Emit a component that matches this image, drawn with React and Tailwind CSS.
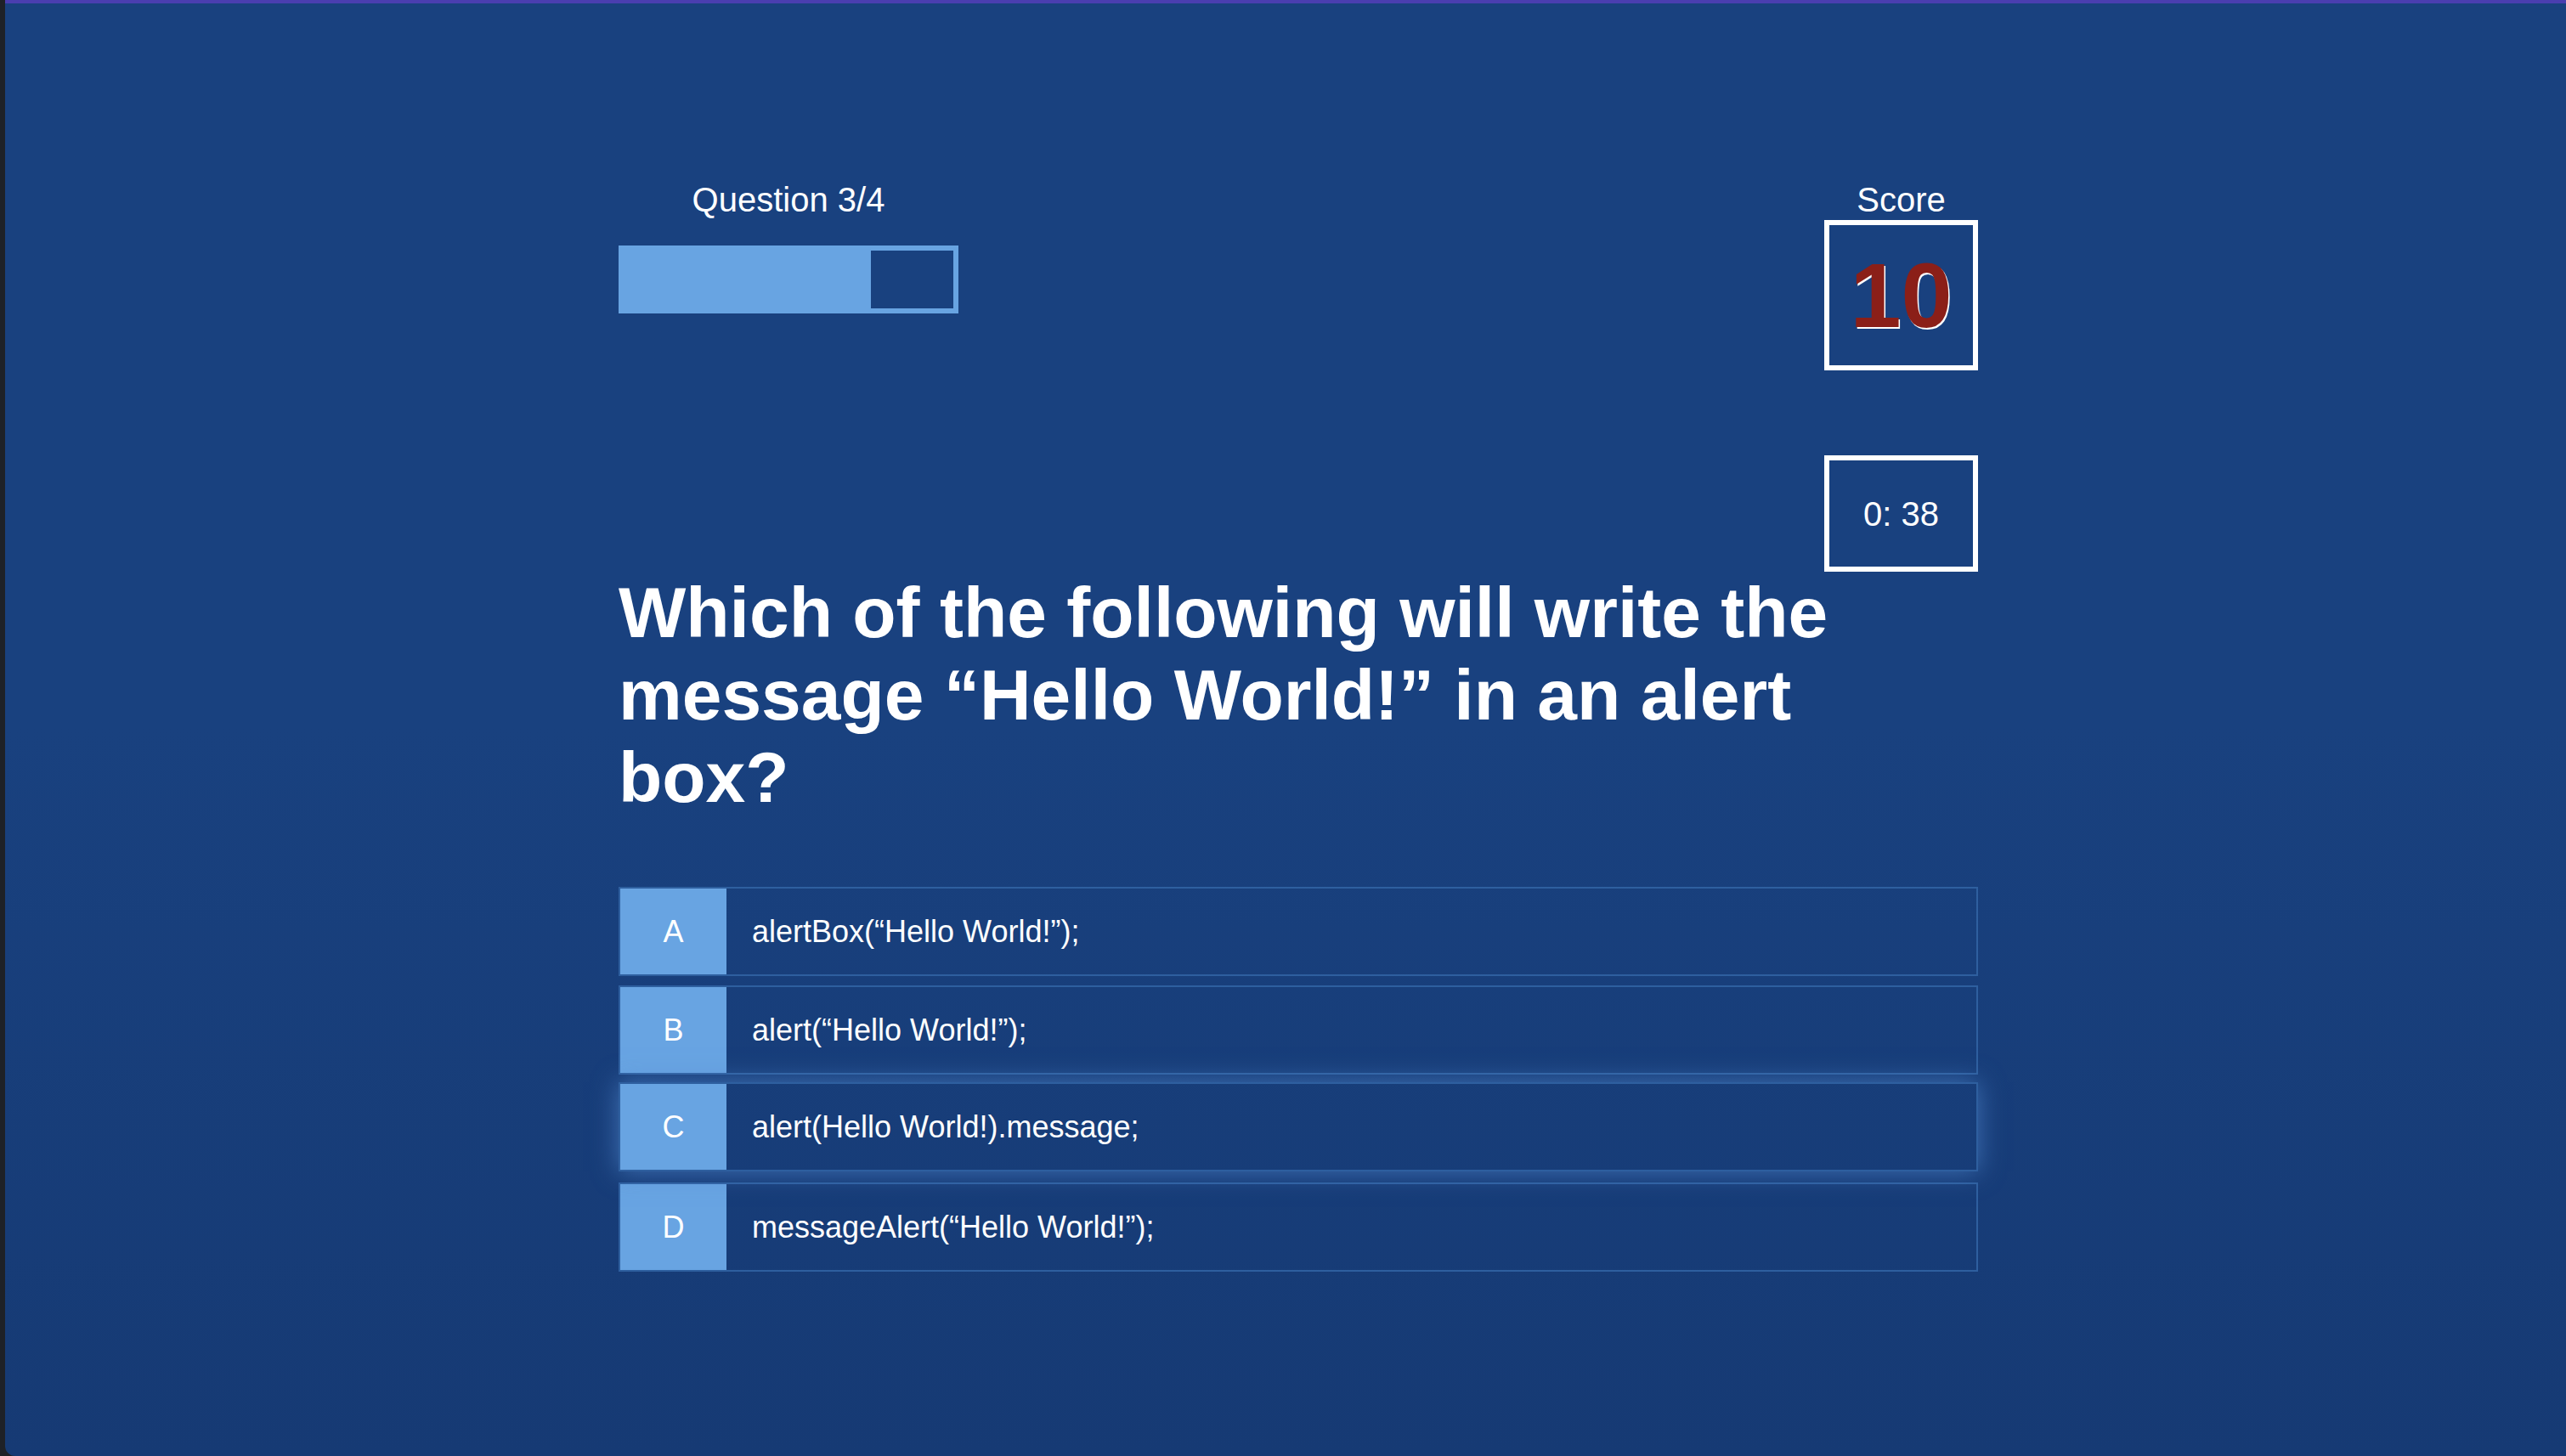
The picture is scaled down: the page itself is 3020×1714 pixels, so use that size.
import React from 'react';

const answers = [
  { letter: 'A', text: 'alertBox(“Hello World!”);' },
  { letter: 'B', text: 'alert(“Hello World!”);' },
  { letter: 'C', text: 'alert(Hello World!).message;', hover: true },
  { letter: 'D', text: 'messageAlert(“Hello World!”);' },
];

export default function App() {
  return (
    <div className="flex min-h-screen bg-[#1e2127] font-['Liberation_Sans',Arial,sans-serif] text-white">
      {/* editor edge on the left */}
      <div className="w-[6px] shrink-0" />

      <div className="flex-1 flex flex-col rounded-bl-[12px] bg-gradient-to-b from-[#19417f] via-[#19417f] to-[#163a74]">
        <div className="h-[4px] bg-[#4a3eb0]" />

        <main className="pl-[722px] pt-[207px] pb-[210px]">
          <div className="w-[1600px]">
            {/* Header: progress + score/timer */}
            <div className="flex justify-between items-start">
              <div className="w-[400px] flex flex-col items-center">
                <p className="text-[40px] leading-[48px]">Question 3/4</p>
                <div className="mt-[30px] w-[400px] h-[80px] border-[6px] border-[#68a4e2]">
                  <div className="h-full w-3/4 bg-[#68a4e2]" />
                </div>
              </div>

              <div className="w-[181px] flex flex-col items-center">
                <p className="text-[40px] leading-[48px]">Score</p>
                <div className="w-[181px] h-[177px] border-[6px] border-white flex items-center justify-center">
                  <span className="text-[108px] leading-none font-bold text-[#8b1f18] [text-shadow:1.5px_1.5px_0_#ffffff]">10</span>
                </div>
                <div className="mt-[100px] w-[181px] h-[137px] border-[6px] border-white flex items-center justify-center">
                  <span className="text-[40px] leading-none">0: 38</span>
                </div>
              </div>
            </div>

            {/* Question */}
            <h1 className="w-[1500px] text-[84px] leading-[97px] font-bold">
              Which of the following will write the message “Hello World!” in an alert box?
            </h1>

            {/* Answers */}
            <div className="mt-[80px] flex flex-col gap-[11px]">
              {answers.map((a) => (
                <div
                  key={a.letter}
                  className={
                    a.hover
                      ? 'flex h-[105px] border-2 border-[#2e5f9f] -translate-y-[2px] shadow-[0_0_28px_rgba(84,140,210,0.65)]'
                      : 'flex h-[105px] border-2 border-[#2e5f9f]'
                  }
                >
                  <div className="w-[125px] bg-[#68a4e2] flex items-center justify-center text-[36px]">
                    {a.letter}
                  </div>
                  <div className="flex-1 flex items-center pl-[30px] text-[36px]">{a.text}</div>
                </div>
              ))}
            </div>
          </div>
        </main>
      </div>
    </div>
  );
}
